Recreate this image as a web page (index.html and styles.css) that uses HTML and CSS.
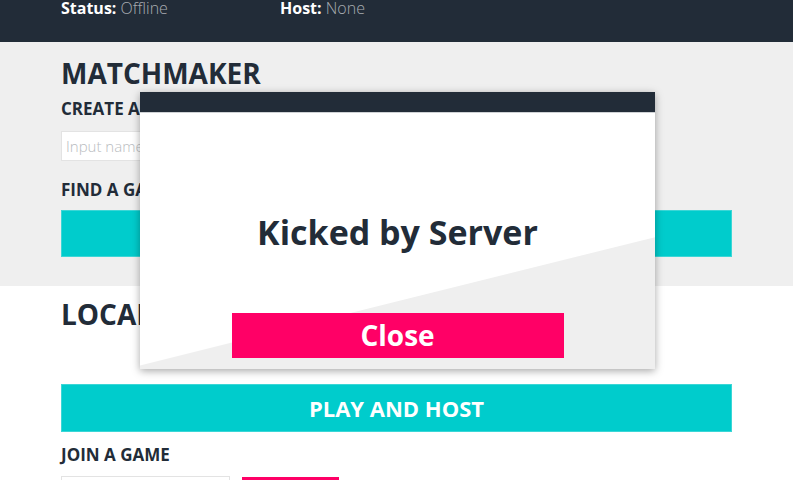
FILE: index.html
```html
<!DOCTYPE html>
<html>
<head>
<meta charset="utf-8">
<link rel="stylesheet" href="styles.css">
</head>
<body>
<header class="topbar">
  <div class="stat"><b>Status:</b> <span>Offline</span></div>
  <div class="stat"><b>Host:</b> <span>None</span></div>
</header>
<section class="panel panel-gray">
  <h1 class="title">MATCHMAKER</h1>
  <h3 class="sub">CREATE A GAME</h3>
  <input class="field" type="text" placeholder="Input name">
  <h3 class="sub sub-find">FIND A GAME</h3>
  <button class="btn-teal btn-mm">FIND A GAME</button>
</section>
<section class="panel panel-white">
  <h1 class="title">LOCAL</h1>
  <button class="btn-teal btn-host">PLAY AND HOST</button>
  <h3 class="sub sub-join">JOIN A GAME</h3>
  <div class="join-row">
    <input class="field" type="text" placeholder="Input IP">
    <button class="btn-pink-sm">JOIN</button>
  </div>
</section>
<div class="modal">
  <div class="modal-bar"></div>
  <div class="modal-body">
    <h2 class="modal-msg">Kicked by Server</h2>
    <button class="modal-close">Close</button>
  </div>
</div>
</body>
</html>
```
FILE: styles.css
```css
* { box-sizing: border-box; }
html, body { margin: 0; padding: 0; }
body {
  font-family: "Open Sans", "Liberation Sans", sans-serif;
  color: #222c38;
  background: #ffffff;
  width: 793px;
  height: 480px;
  overflow: hidden;
}
.topbar {
  height: 42px;
  background: #222c38;
  display: grid;
  grid-template-columns: 219px auto;
  padding: 0 61px;
  font-size: 16px;
  line-height: 16px;
}
.stat b { color: #ffffff; font-weight: 700; }
.stat span { color: #a9adb2; font-weight: 300; }
.panel { padding: 0 61px; }
.panel-gray {
  background: #efefef;
  padding-top: 15px;
  padding-bottom: 29px;
}
.panel-white { padding-top: 12px; }
.title {
  margin: 0;
  font-size: 28px;
  line-height: 1.2;
  font-weight: 700;
}
.sub {
  margin: 8px 0 0;
  font-size: 17px;
  line-height: 1.2;
  font-weight: 700;
}
.field {
  display: block;
  margin-top: 12px;
  width: 169px;
  height: 30px;
  border: 1px solid #e3e3e3;
  background: #fff;
  font-family: "Open Sans", sans-serif;
  font-size: 15px;
  font-weight: 300;
  padding: 0 4px;
  color: #222c38;
}
.field::placeholder { color: #b9bcc0; }
.sub-find { margin-top: 19px; }
.btn-teal {
  display: block;
  width: 100%;
  border: 1px solid #3bd6d6;
  background: #00cccc;
  color: #fff;
  font-family: "Open Sans", sans-serif;
  font-weight: 700;
  font-size: 22px;
  padding: 0;
}
.btn-mm { margin-top: 10px; height: 47px; line-height: 45px; }
.btn-host { margin-top: 52px; height: 48px; line-height: 46px; }
.sub-join { margin-top: 13px; }
.join-row { display: flex; gap: 12px; align-items: flex-start; }
.join-row .field { margin-top: 11px; }
.btn-pink-sm {
  margin-top: 12px;
  width: 97px;
  height: 30px;
  border: 0;
  background: #ff0066;
  color: #fff;
  font-family: "Open Sans", sans-serif;
  font-weight: 700;
  font-size: 16px;
}
.modal {
  position: absolute;
  left: 140px;
  top: 92px;
  width: 515px;
  height: 277px;
  background: #fff;
  box-shadow: 0 2px 8px rgba(0, 0, 0, 0.35);
  display: flex;
  flex-direction: column;
}
.modal-bar {
  height: 21px;
  background: #222c38;
  border-bottom: 1px solid #cfd2d5;
}
.modal-body {
  position: relative;
  flex: 1;
  display: flex;
  flex-direction: column;
  align-items: center;
  padding-top: 99px;
}
.modal-body::before {
  content: "";
  position: absolute;
  inset: 0;
  background: #efefef;
  clip-path: polygon(0 98.6%, 100% 48.5%, 100% 100%, 0 100%);
}
.modal-msg {
  position: relative;
  margin: 0;
  font-size: 34px;
  line-height: 1.2;
  font-weight: 700;
}
.modal-close {
  position: relative;
  margin-top: 60px;
  width: 332px;
  height: 45px;
  border: 0;
  background: #ff0066;
  color: #fff;
  font-family: "Open Sans", sans-serif;
  font-weight: 700;
  font-size: 28px;
  line-height: 45px;
  padding: 0;
}
```
